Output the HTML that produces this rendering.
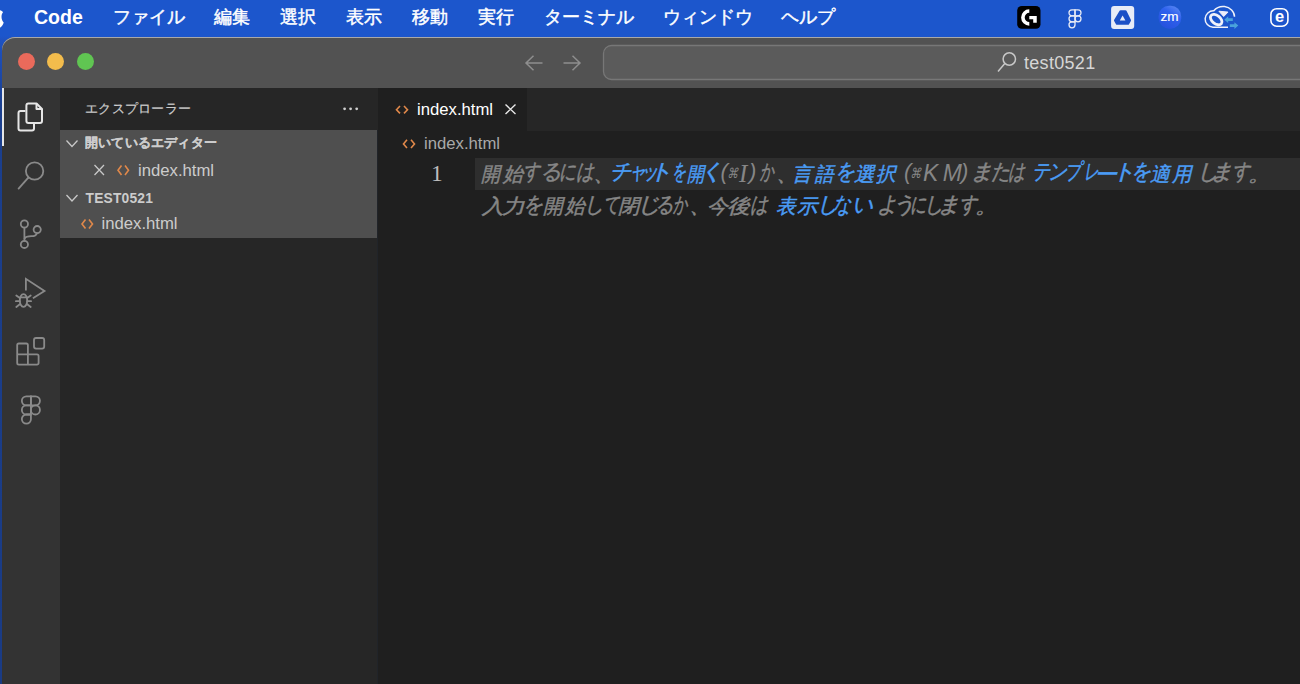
<!DOCTYPE html>
<html><head><meta charset="utf-8">
<style>
*{margin:0;padding:0;box-sizing:border-box}
html,body{width:1300px;height:684px;overflow:hidden;background:linear-gradient(#1c56cc 0,#1c56cc 36px,#1e52c2 40px,#1b3f8e 110px,#1a3b84 684px);font-family:"Liberation Sans",sans-serif}
.a{position:absolute;white-space:nowrap}
#menubar{left:0;top:0;width:1300px;height:36px;background:#1c56cc}
.mi{position:absolute;top:5.5px;color:#fff;font-size:17.6px;line-height:22px;white-space:nowrap;-webkit-text-stroke:0.45px #fff}
#win{left:2px;top:37px;width:1320px;height:700px;border-radius:13px 0 0 0;background:#525252;overflow:hidden;box-shadow:inset 0 1px 0 #a9a9a9}
.tl{position:absolute;width:17px;height:17px;border-radius:50%;top:53px}
.t{position:absolute;white-space:nowrap;line-height:1}
.cj{-webkit-text-stroke:0.2px currentColor}
svg{position:absolute;overflow:visible}
#ed .cj{-webkit-text-stroke:0.45px currentColor}
</style></head>
<body>
<div id="menubar" class="a"></div>
<!-- apple logo fragment -->
<svg style="left:0;top:0" width="10" height="36"><path d="M-3,10.3 C0,10 2,10.6 3,12.3 C1.6,13.8 1.2,16.5 1.8,19 C2.2,20.8 3.2,22 3.7,22.5 C3.1,24.6 1.6,27.4 -0.5,27.8 C-2,28 -3,27.8 -3,27.8 Z" fill="#fff"/></svg>
<div class="mi" style="left:34px;font-weight:bold;font-size:19.5px;-webkit-text-stroke:0">Code</div>
<div class="mi" style="left:113px">ファイル</div>
<div class="mi" style="left:214px">編集</div>
<div class="mi" style="left:280px">選択</div>
<div class="mi" style="left:346px">表示</div>
<div class="mi" style="left:412px">移動</div>
<div class="mi" style="left:478px">実行</div>
<div class="mi" style="left:544px">ターミナル</div>
<div class="mi" style="left:663px">ウィンドウ</div>
<div class="mi" style="left:781px">ヘルプ</div>

<!-- menubar status icons -->
<svg style="left:0;top:0" width="1300" height="36">
  <rect x="1017.2" y="5.9" width="23.3" height="22.9" rx="4.6" fill="#000"/>
  <path d="M1029.3,11.05 A6.4,6.4 0 0 0 1029.3,23.85" stroke="#fff" stroke-width="3.6" fill="none"/>
  <path d="M1029.3,16 H1036.75 V22.8 H1033.2 V19.2 H1029.3 Z" fill="#fff"/>
  <g stroke="#e8ebf6" stroke-width="1.3" fill="none">
    <path d="M1075,9.8 H1072 a3,3 0 0 0 0,6 H1075 Z"/>
    <path d="M1075,9.8 H1078 a3,3 0 0 1 0,6 H1075 Z"/>
    <path d="M1075,15.8 H1072 a3,3 0 0 0 0,6 H1075 Z"/>
    <circle cx="1078" cy="18.8" r="3"/>
    <path d="M1075,21.8 H1072 a3,3 0 1 0 3,3 Z"/>
  </g>
  <rect x="1111.1" y="6" width="23.1" height="23" rx="3" fill="#e8ecf7"/>
  <path d="M1120.6,11.4 H1125.4 L1129.8,20.4 L1128,23.6 H1117 L1115.2,20.4 Z" fill="#1c50c6" stroke="#1c50c6" stroke-width="2.4" stroke-linejoin="round"/>
  <path d="M1122.6,15.6 L1125.4,20.6 H1119.8 Z" fill="#e8ecf7"/>
  <defs><linearGradient id="zg" x1="0.8" y1="0" x2="0.2" y2="1"><stop offset="0" stop-color="#5a88f2"/><stop offset="0.35" stop-color="#2f62ee"/><stop offset="1" stop-color="#2550dc"/></linearGradient></defs>
  <rect x="1158.6" y="5.7" width="22.6" height="23" rx="10.5" fill="url(#zg)"/>
  <text x="1169.6" y="21.3" font-family="Liberation Sans" font-size="13.5" fill="#fff" stroke="#fff" stroke-width="0.15" text-anchor="middle">zm</text>
  <g stroke="#f0f2fa" fill="none">
    <path d="M1228,27.3 H1213 A7.2,7.2 0 0 1 1213.8,10.8 C1216.5,7.5 1220.5,6.2 1224.5,6.6 C1230,7.2 1234.6,11.5 1234.5,16.8" stroke-width="1.5"/>
    <ellipse cx="1216.2" cy="19.6" rx="6.6" ry="4.1" transform="rotate(38 1216.2 19.6)" stroke-width="2.8"/>
  </g>
  <path d="M1218.9,11.2 L1228,12.1 L1223.7,16.5 Z" fill="#eef0fa" stroke="#eef0fa" stroke-width="1" stroke-linejoin="round"/>
  <path d="M1224.3,19.7 L1228.2,16.3 V18.3 H1232.8 V21.1 H1228.2 V23.1 Z" fill="#4aa3dc"/>
  <path d="M1238.3,25.6 L1234.4,22.2 V24.2 H1229.8 V27 H1234.4 V29 Z" fill="#4aa3dc"/>
  <rect x="1270.9" y="8.7" width="17" height="17.5" rx="5.8" stroke="#fff" stroke-width="1.6" fill="none"/>
  <text x="1279.5" y="22.2" font-family="Liberation Sans" font-size="16.5" font-weight="bold" fill="#fff" text-anchor="middle">e</text>
</svg>

<div id="win" class="a"></div>
<div class="tl" style="left:17.5px;background:#ea6a5b"></div>
<div class="tl" style="left:47px;background:#f3bc4c"></div>
<div class="tl" style="left:76.5px;background:#60c552"></div>

<svg style="left:0;top:0" width="1300" height="90">
  <g stroke="#8e8e8e" stroke-width="1.5" fill="none">
    <path d="M542.5,63 H526.5 M533.5,55.7 L526,63 L533.5,70.3"/>
    <path d="M563.5,63 H579.5 M572.5,55.7 L580,63 L572.5,70.3"/>
  </g>
  <rect x="603.5" y="45.5" width="760" height="34" rx="8" fill="#5b5b5b" stroke="#777" stroke-width="1.3"/>
  <g stroke="#c8c8c8" stroke-width="1.5" fill="none">
    <circle cx="1009.3" cy="59" r="6.2"/>
    <path d="M1004.8,63.6 L998,71.5"/>
  </g>
</svg>
<div class="t" style="left:1024px;top:54px;font-size:18px;color:#d6d6d6;letter-spacing:0.3px">test0521</div>

<!-- main panes -->
<div class="a" style="left:2px;top:88px;width:58px;height:600px;background:#333"></div>
<div class="a" style="left:60px;top:88px;width:318px;height:600px;background:#262626"></div>
<div class="a" style="left:378px;top:88px;width:922px;height:600px;background:#1f1f1f"></div>
<div class="a" style="left:527px;top:88px;width:773px;height:42.5px;background:#262626"></div>
<div class="a" style="left:475px;top:158px;width:825px;height:32px;background:#2e2e2e"></div>
<div class="a" style="left:60px;top:130px;width:317.3px;height:107.5px;background:#4f4f4f"></div>
<div class="a" style="left:377px;top:130px;width:1.3px;height:560px;background:#212429"></div>
<!-- active indicator -->
<div class="a" style="left:2px;top:88px;width:2px;height:58px;background:#e6e6e6"></div>

<!-- activity bar icons -->
<svg style="left:0;top:0" width="60" height="440">
  <g stroke="#e6e6e6" stroke-width="2" fill="none" stroke-linejoin="round">
    <path d="M25.4,111 H20.5 a2,2 0 0 0 -2,2 V128.4 a2,2 0 0 0 2,2 H32 a2,2 0 0 0 2,-2 V124"/>
    <path d="M28.4,103.5 H36.5 L42,109 V121 a2,2 0 0 1 -2,2 H28.4 a2,2 0 0 1 -2,-2 V105.5 a2,2 0 0 1 2,-2 Z"/>
    <path d="M36.5,103.5 V109 H42"/>
  </g>
  <g stroke="#8a8a8a" stroke-width="1.8" fill="none" stroke-linecap="round">
    <circle cx="34.6" cy="171" r="8.7"/>
    <path d="M28.3,177.6 L18.6,188.6"/>
    <circle cx="24.4" cy="224" r="3.6"/>
    <circle cx="37.2" cy="229.6" r="3.6"/>
    <circle cx="24.4" cy="244.4" r="3.6"/>
    <path d="M24.4,227.6 V240.8"/>
    <path d="M24.6,238.5 C25.5,236.8 28,236.2 31.5,236.2 C34.5,236.2 36.5,234.8 37,233.2"/>
    <path d="M25.9,290.5 V278.8 L44.5,290.9 L32.9,298.2" stroke-linecap="butt" stroke-linejoin="miter"/>
    <ellipse cx="23.5" cy="300.5" rx="3.7" ry="6.3"/>
    <path d="M19.8,297.4 H27.2 M16.3,295.5 L19.8,298 M15.9,301.2 H19.8 M16.3,307 L19.8,304.2 M30.7,295.5 L27.2,298 M31.1,301.2 H27.2 M30.7,307 L27.2,304.2"/>
    <path d="M18.8,343.5 H26.3 a1.6,1.6 0 0 1 1.6,1.6 V354.3 H37 a1.6,1.6 0 0 1 1.6,1.6 V363 a1.6,1.6 0 0 1 -1.6,1.6 H18.8 a1.6,1.6 0 0 1 -1.6,-1.6 V345.1 a1.6,1.6 0 0 1 1.6,-1.6 Z M17.2,354.3 H27.9 V364.6"/>
    <rect x="34" y="338" width="10.2" height="10.6" rx="2"/>
    <path d="M30.9,396.3 H26.4 a4.55,4.55 0 0 0 0,9.1 H30.9 Z"/>
    <path d="M30.9,396.3 H35.4 a4.55,4.55 0 0 1 0,9.1 H30.9 Z"/>
    <path d="M30.9,405.4 H26.4 a4.55,4.55 0 0 0 0,9.1 H30.9 Z"/>
    <circle cx="35.4" cy="409.95" r="4.55"/>
    <path d="M30.9,414.5 H26.4 a4.55,4.55 0 1 0 4.55,4.55 Z"/>
  </g>
</svg>

<!-- sidebar -->
<div class="t cj" style="left:85px;top:102px;font-size:13.2px;color:#cccccc;letter-spacing:0.3px">エクスプローラー</div>
<svg style="left:0;top:0" width="380" height="240">
  <g fill="#cfcfcf"><circle cx="344.6" cy="108.8" r="1.4"/><circle cx="350.6" cy="108.8" r="1.4"/><circle cx="356.7" cy="108.8" r="1.4"/></g>
  <g stroke="#c8c8c8" stroke-width="1.3" fill="none">
    <path d="M66.5,140.5 L72,146.5 L77.5,140.5"/>
    <path d="M66.5,195 L72,201 L77.5,195"/>
    <path d="M94.5,165 L104,175 M104,165 L94.5,175"/>
  </g>
  <g stroke="#e0884a" stroke-width="1.6" fill="none">
    <path d="M121.5,165.5 L118,170.3 L121.5,175 M125,165.5 L128.5,170.3 L125,175"/>
    <path d="M85.5,219.5 L82,224 L85.5,228.5 M89,219.5 L92.5,224 L89,228.5"/>
    <path d="M400,106 L396.5,109.7 L400,113.4 M404,106 L407.5,109.7 L404,113.4"/>
    <path d="M407,139.8 L403.5,143.9 L407,148 M411,139.8 L414.5,143.9 L411,148"/>
  </g>
  <g stroke="#e8e8e8" stroke-width="1.4" fill="none">
    <path d="M505.5,104.5 L515.5,114 M515.5,104.5 L505.5,114"/>
  </g>
</svg>
<div class="t cj" style="left:85px;top:136px;font-size:13.2px;font-weight:bold;color:#cccccc;letter-spacing:0.2px">開いているエディター</div>
<div class="t" style="left:138px;top:163px;font-size:16.7px;color:#cccccc">index.html</div>
<div class="t" style="left:85.5px;top:191.5px;font-size:13.8px;font-weight:bold;color:#cccccc;letter-spacing:0.2px">TEST0521</div>
<div class="t" style="left:101.5px;top:216.3px;font-size:16.7px;color:#cccccc">index.html</div>

<!-- tab + breadcrumbs -->
<div class="t" style="left:417px;top:101.5px;font-size:16.7px;color:#ffffff">index.html</div>
<div class="t" style="left:424px;top:135.5px;font-size:16.7px;color:#a9a9a9">index.html</div>

<!-- editor -->
<div class="t" style="left:431px;top:161.5px;font-size:23.5px;color:#bdbdbd;font-family:'Liberation Serif',serif">1</div>
<div id="ed" class="t" style="left:0;top:0;font-size:20px;font-style:italic;line-height:1">
<span class="a cj" style="left:481.3px;top:163.5px;color:#868686;transform:scale(0.952,1.0);transform-origin:1px 19px">開</span>
<span class="a cj" style="left:503.0px;top:163.5px;color:#868686;transform:scale(1.000,1.0);transform-origin:0px 19px">始</span>
<span class="a cj" style="left:523.0px;top:162.3px;color:#868686;transform:scale(0.842,1.1);transform-origin:3px 19px">す</span>
<span class="a cj" style="left:540.0px;top:162.3px;color:#868686;transform:scale(1.067,1.1);transform-origin:4px 19px">る</span>
<span class="a cj" style="left:559.0px;top:162.3px;color:#868686;transform:scale(0.833,1.1);transform-origin:2px 19px">に</span>
<span class="a cj" style="left:575.7px;top:162.3px;color:#868686;transform:scale(0.889,1.1);transform-origin:2px 19px">は</span>
<span class="a cj" style="left:593.0px;top:163.5px;color:#868686;transform:scale(1.150,1.0);transform-origin:3px 19px">、</span>
<span class="a cj" style="left:610.0px;top:162.3px;color:#4a9cf5;transform:scale(1.056,1.1);transform-origin:3px 19px">チ</span>
<span class="a cj" style="left:628.0px;top:162.3px;color:#4a9cf5;transform:scale(0.857,1.1);transform-origin:5px 19px">ャ</span>
<span class="a cj" style="left:640.0px;top:162.3px;color:#4a9cf5;transform:scale(0.857,1.1);transform-origin:5px 19px">ッ</span>
<span class="a cj" style="left:650.0px;top:162.3px;color:#4a9cf5;transform:scale(1.150,1.1);transform-origin:7px 19px">ト</span>
<span class="a cj" style="left:671.0px;top:162.3px;color:#4a9cf5;transform:scale(0.706,1.1);transform-origin:3px 19px">を</span>
<span class="a cj" style="left:687.0px;top:163.5px;color:#4a9cf5;transform:scale(0.857,1.0);transform-origin:1px 19px">開</span>
<span class="a cj" style="left:701.0px;top:162.3px;color:#4a9cf5;transform:scale(1.150,1.1);transform-origin:7px 19px">く</span>
<span class="a" style="left:720.5px;top:160.8px;font-size:22px;color:#868686">(</span>
<span class="a" style="left:726.5px;top:165.8px;font-size:14px;color:#868686;transform:scaleX(0.8);transform-origin:2px 0">⌘</span>
<span class="a" style="left:739.0px;top:160.5px;font-size:25px;font-family:'Liberation Serif',serif;color:#868686">I</span>
<span class="a" style="left:749.0px;top:160.8px;font-size:22px;color:#868686">)</span>
<span class="a cj" style="left:760.0px;top:162.3px;color:#868686;transform:scale(0.695,1.1);transform-origin:0px 19px">か</span>
<span class="a cj" style="left:775.5px;top:163.5px;color:#868686;transform:scale(1.150,1.0);transform-origin:3px 19px">、</span>
<span class="a cj" style="left:792.4px;top:163.5px;color:#4a9cf5;transform:scale(1.000,1.0);transform-origin:3px 19px">言</span>
<span class="a cj" style="left:815.4px;top:163.5px;color:#4a9cf5;transform:scale(0.936,1.0);transform-origin:0px 19px">語</span>
<span class="a cj" style="left:834.7px;top:162.3px;color:#4a9cf5;transform:scale(0.994,1.1);transform-origin:3px 19px">を</span>
<span class="a cj" style="left:854.4px;top:163.5px;color:#4a9cf5;transform:scale(1.030,1.0);transform-origin:1px 19px">選</span>
<span class="a cj" style="left:876.0px;top:163.5px;color:#4a9cf5;transform:scale(0.986,1.0);transform-origin:1px 19px">択</span>
<span class="a" style="left:904.0px;top:160.8px;font-size:22px;color:#868686">(</span>
<span class="a" style="left:910.0px;top:165.8px;font-size:14px;color:#868686;transform:scaleX(0.8);transform-origin:2px 0">⌘</span>
<span class="a" style="left:923.0px;top:162px;font-size:23px;color:#868686">K</span>
<span class="a" style="left:942.8px;top:162px;font-size:23px;color:#868686">M</span>
<span class="a" style="left:961.0px;top:160.8px;font-size:22px;color:#868686">)</span>
<span class="a cj" style="left:970.6px;top:162.3px;color:#868686;transform:scale(1.150,1.1);transform-origin:4px 19px">ま</span>
<span class="a cj" style="left:991.0px;top:162.3px;color:#868686;transform:scale(0.941,1.1);transform-origin:2px 19px">た</span>
<span class="a cj" style="left:1008.0px;top:162.3px;color:#868686;transform:scale(0.842,1.1);transform-origin:2px 19px">は</span>
<span class="a cj" style="left:1031.6px;top:162.3px;color:#4a9cf5;transform:scale(0.900,1.1);transform-origin:3px 19px">テ</span>
<span class="a cj" style="left:1047.8px;top:162.3px;color:#4a9cf5;transform:scale(0.939,1.1);transform-origin:3px 19px">ン</span>
<span class="a cj" style="left:1063.7px;top:162.3px;color:#4a9cf5;transform:scale(0.805,1.1);transform-origin:4px 19px">プ</span>
<span class="a cj" style="left:1083.0px;top:162.3px;color:#4a9cf5;transform:scale(0.735,1.1);transform-origin:3px 19px">レ</span>
<span class="a cj" style="left:1094.5px;top:163.5px;color:#4a9cf5;transform:scale(1.150,1.0);transform-origin:4px 19px">ー</span>
<span class="a cj" style="left:1113.0px;top:162.3px;color:#4a9cf5;transform:scale(1.150,1.1);transform-origin:7px 19px">ト</span>
<span class="a cj" style="left:1130.8px;top:162.3px;color:#4a9cf5;transform:scale(1.000,1.1);transform-origin:3px 19px">を</span>
<span class="a cj" style="left:1149.8px;top:163.5px;color:#4a9cf5;transform:scale(0.986,1.0);transform-origin:1px 19px">適</span>
<span class="a cj" style="left:1171.5px;top:163.5px;color:#4a9cf5;transform:scale(0.977,1.0);transform-origin:0px 19px">用</span>
<span class="a cj" style="left:1196.5px;top:162.3px;color:#868686;transform:scale(1.092,1.1);transform-origin:5px 19px">し</span>
<span class="a cj" style="left:1211.4px;top:162.3px;color:#868686;transform:scale(1.150,1.1);transform-origin:4px 19px">ま</span>
<span class="a cj" style="left:1231.6px;top:162.3px;color:#868686;transform:scale(0.889,1.1);transform-origin:3px 19px">す</span>
<span class="a cj" style="left:1248.0px;top:163.5px;color:#868686;transform:scale(1.150,1.0);transform-origin:2px 19px">。</span>
<span class="a cj" style="left:482.3px;top:196px;color:#868686;transform:scale(1.089,1.0);transform-origin:0px 19px">入</span>
<span class="a cj" style="left:502.0px;top:196px;color:#868686;transform:scale(1.137,1.0);transform-origin:1px 19px">力</span>
<span class="a cj" style="left:523.0px;top:194.8px;color:#868686;transform:scale(1.000,1.1);transform-origin:3px 19px">を</span>
<span class="a cj" style="left:542.8px;top:196px;color:#868686;transform:scale(0.990,1.0);transform-origin:1px 19px">開</span>
<span class="a cj" style="left:564.6px;top:196px;color:#868686;transform:scale(0.990,1.0);transform-origin:0px 19px">始</span>
<span class="a cj" style="left:584.0px;top:194.8px;color:#868686;transform:scale(0.983,1.1);transform-origin:5px 19px">し</span>
<span class="a cj" style="left:602.0px;top:194.8px;color:#868686;transform:scale(0.824,1.1);transform-origin:4px 19px">て</span>
<span class="a cj" style="left:618.0px;top:196px;color:#868686;transform:scale(1.071,1.0);transform-origin:1px 19px">閉</span>
<span class="a cj" style="left:638.4px;top:194.8px;color:#868686;transform:scale(1.150,1.1);transform-origin:5px 19px">じ</span>
<span class="a cj" style="left:655.0px;top:194.8px;color:#868686;transform:scale(0.933,1.1);transform-origin:4px 19px">る</span>
<span class="a cj" style="left:673.0px;top:194.8px;color:#868686;transform:scale(0.714,1.1);transform-origin:0px 19px">か</span>
<span class="a cj" style="left:689.3px;top:196px;color:#868686;transform:scale(1.150,1.0);transform-origin:3px 19px">、</span>
<span class="a cj" style="left:707.0px;top:196px;color:#868686;transform:scale(1.053,1.0);transform-origin:2px 19px">今</span>
<span class="a cj" style="left:727.0px;top:196px;color:#868686;transform:scale(1.147,1.0);transform-origin:2px 19px">後</span>
<span class="a cj" style="left:750.3px;top:194.8px;color:#868686;transform:scale(0.889,1.1);transform-origin:2px 19px">は</span>
<span class="a cj" style="left:776.0px;top:196px;color:#4a9cf5;transform:scale(0.986,1.0);transform-origin:1px 19px">表</span>
<span class="a cj" style="left:796.7px;top:196px;color:#4a9cf5;transform:scale(1.024,1.0);transform-origin:1px 19px">示</span>
<span class="a cj" style="left:816.5px;top:194.8px;color:#4a9cf5;transform:scale(1.025,1.1);transform-origin:5px 19px">し</span>
<span class="a cj" style="left:833.4px;top:194.8px;color:#4a9cf5;transform:scale(0.889,1.1);transform-origin:2px 19px">な</span>
<span class="a cj" style="left:851.6px;top:194.8px;color:#4a9cf5;transform:scale(1.041,1.1);transform-origin:3px 19px">い</span>
<span class="a cj" style="left:877.2px;top:194.8px;color:#868686;transform:scale(1.012,1.1);transform-origin:2px 19px">よ</span>
<span class="a cj" style="left:892.7px;top:194.8px;color:#868686;transform:scale(1.150,1.1);transform-origin:5px 19px">う</span>
<span class="a cj" style="left:909.5px;top:194.8px;color:#868686;transform:scale(0.806,1.1);transform-origin:2px 19px">に</span>
<span class="a cj" style="left:923.5px;top:194.8px;color:#868686;transform:scale(0.958,1.1);transform-origin:5px 19px">し</span>
<span class="a cj" style="left:937.5px;top:194.8px;color:#868686;transform:scale(1.150,1.1);transform-origin:4px 19px">ま</span>
<span class="a cj" style="left:958.5px;top:194.8px;color:#868686;transform:scale(0.895,1.1);transform-origin:3px 19px">す</span>
<span class="a cj" style="left:975.0px;top:196px;color:#868686;transform:scale(1.150,1.0);transform-origin:2px 19px">。</span>
</div>
</body></html>
</body></html>
